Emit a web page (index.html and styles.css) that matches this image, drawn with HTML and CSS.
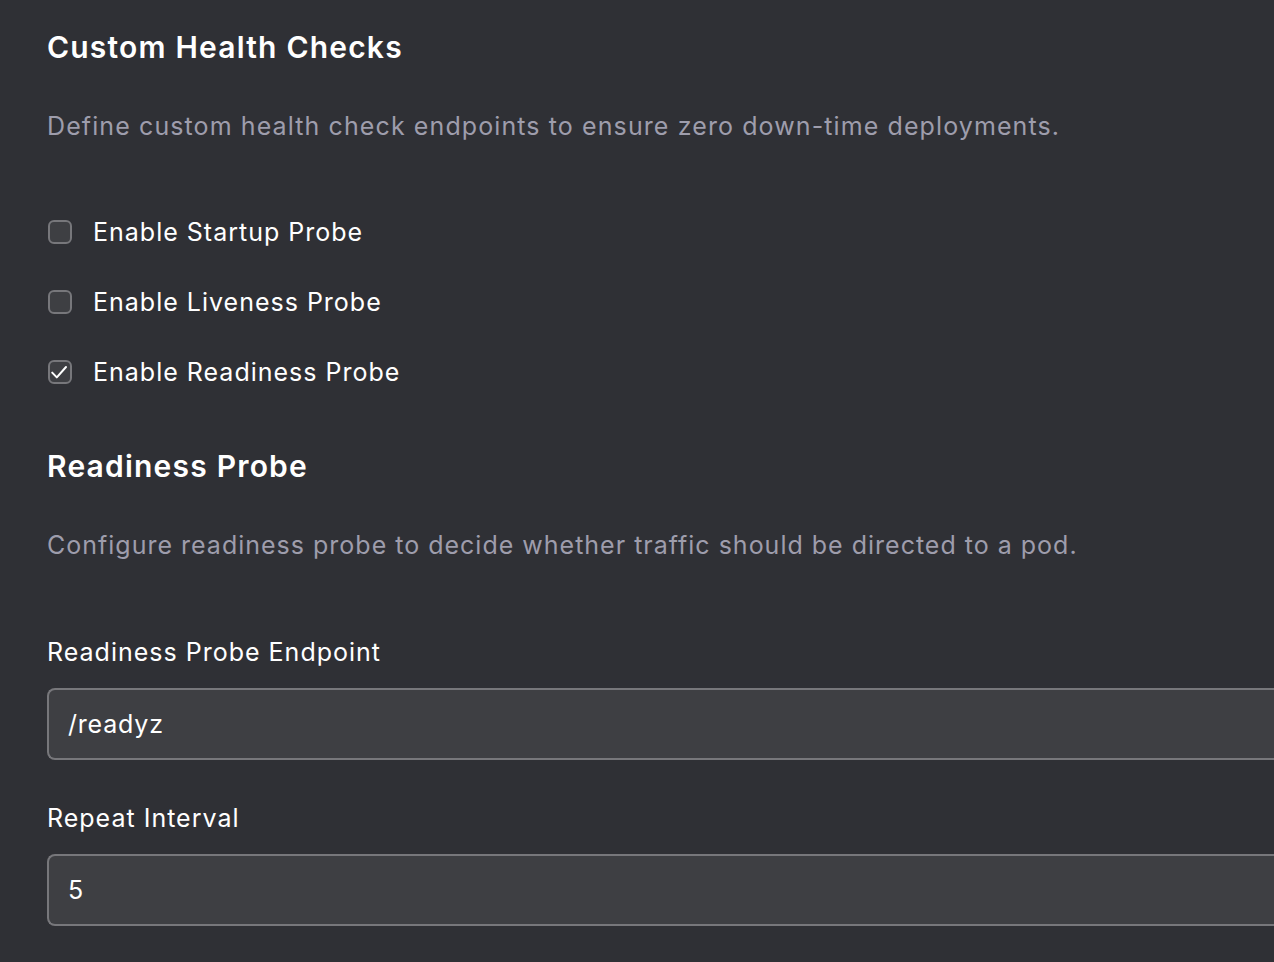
FILE: index.html
```html
<!DOCTYPE html>
<html lang="en">
<head>
<meta charset="utf-8">
<title>Custom Health Checks</title>
<link rel="stylesheet" href="styles.css">
</head>
<body>
<main class="page">
  <h1 class="title">Custom Health Checks</h1>
  <p class="desc desc-first">Define custom health check endpoints to ensure zero down-time deployments.</p>
  <div class="checks">
    <label class="check"><span class="box"></span><span class="check-label">Enable Startup Probe</span></label>
    <label class="check"><span class="box"></span><span class="check-label">Enable Liveness Probe</span></label>
    <label class="check"><span class="box checked"><svg viewBox="0 0 20 20" width="20" height="20"><path d="M2.2 10.6l4.6 4.8 9.2-10.4" fill="none" stroke="#ffffff" stroke-width="2" stroke-linecap="round" stroke-linejoin="round"/></svg></span><span class="check-label">Enable Readiness Probe</span></label>
  </div>
  <h2 class="title title-second">Readiness Probe</h2>
  <p class="desc desc-second">Configure readiness probe to decide whether traffic should be directed to a pod.</p>
  <div class="field field-first">
    <div class="field-label">Readiness Probe Endpoint</div>
    <div class="input">/readyz</div>
  </div>
  <div class="field field-second">
    <div class="field-label">Repeat Interval</div>
    <div class="input">5</div>
  </div>
</main>
</body>
</html>
```

FILE: styles.css
```css
html, body {
  margin: 0;
  padding: 0;
  background: #2f3035;
  overflow: hidden;
}
body {
  width: 1274px;
  height: 962px;
  font-family: Inter, "Noto Sans", sans-serif;
  color: #ffffff;
}
.page {
  padding-left: 47px;
  box-sizing: border-box;
  width: 1274px;
  height: 962px;
  overflow: hidden;
}
.title {
  margin: 27px 0 0 0;
  font-size: 30px;
  line-height: 40px;
  font-weight: 600;
  color: #ffffff;
  letter-spacing: 1.2px;
}
.title-second {
  margin-top: 54px;
}
.desc {
  margin: 41px 0 0 0;
  font-size: 25px;
  line-height: 36px;
  color: #9e9dac;
  letter-spacing: 1.1px;
}
.desc-second {
  letter-spacing: 1px;
}
.checks {
  margin-top: 68px;
  display: flex;
  flex-direction: column;
  gap: 30px;
}
.check {
  display: flex;
  align-items: center;
  height: 40px;
}
.box {
  width: 20px;
  height: 20px;
  margin-left: 1px;
  border: 2px solid #77777b;
  border-radius: 6px;
  background: #3e3f43;
  display: flex;
  align-items: center;
  justify-content: center;
}
.box svg {
  width: 20px;
  height: 20px;
}
.check-label {
  margin-left: 21px;
  font-size: 25px;
  letter-spacing: 1px;
  color: #ffffff;
}
.field-first {
  margin-top: 71px;
}
.field-second {
  margin-top: 40px;
}
.field-label {
  font-size: 25px;
  line-height: 36px;
  letter-spacing: 1px;
  color: #ffffff;
}
.input {
  margin-top: 18px;
  box-sizing: border-box;
  height: 72px;
  border: 2px solid #77777b;
  border-right: none;
  border-radius: 8px 0 0 8px;
  background: #3e3f43;
  padding-left: 19px;
  display: flex;
  align-items: center;
  font-size: 25px;
  letter-spacing: 0.8px;
  color: #ffffff;
}
```
